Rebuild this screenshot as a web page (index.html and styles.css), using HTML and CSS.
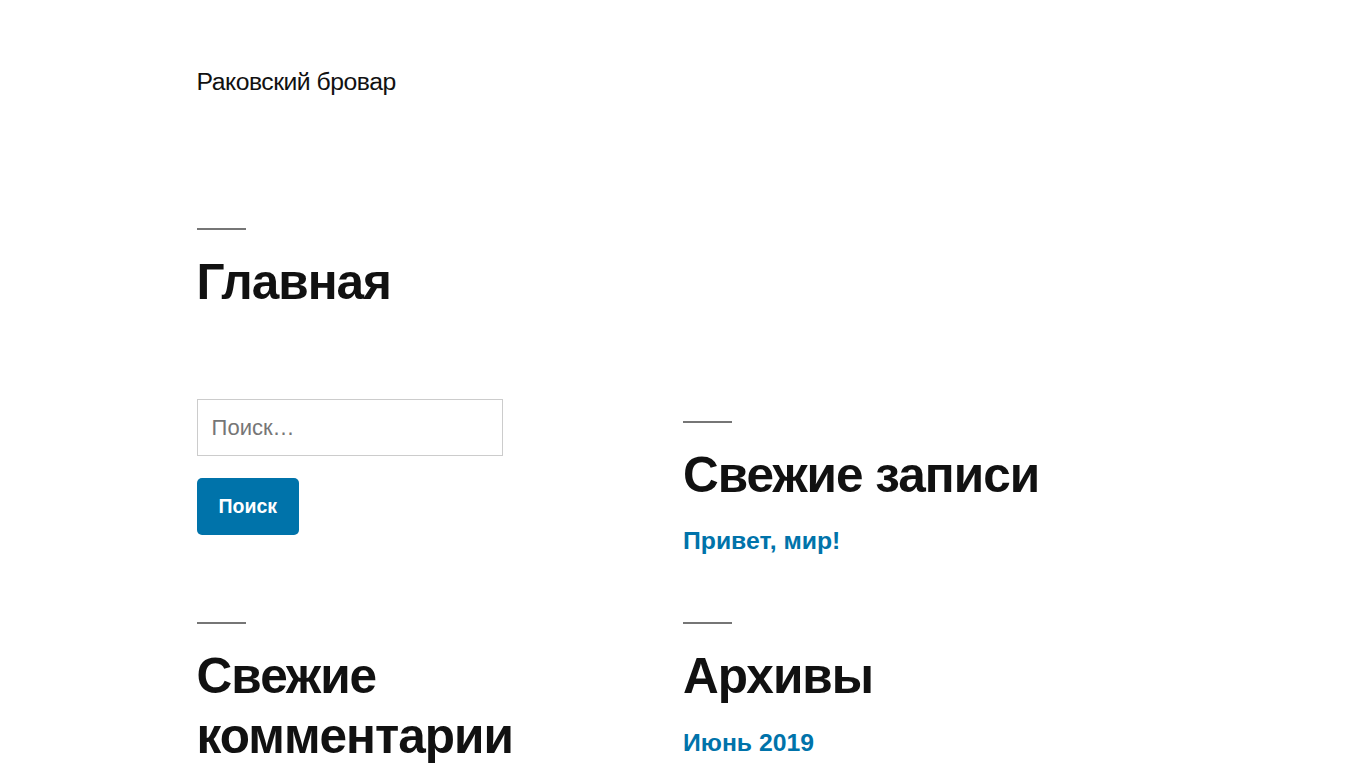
FILE: index.html
```html
<!DOCTYPE html>
<html lang="ru">
<head>
<meta charset="utf-8">
<title>Раковский бровар</title>
<link rel="stylesheet" href="styles.css">
</head>
<body>
<header class="site-header">
  <p class="site-title">Раковский бровар</p>
</header>
<main class="site-main">
  <header class="page-header">
    <h1 class="entry-title">Главная</h1>
  </header>
  <section class="widget-area">
    <div class="widget widget-search">
      <form class="search-form">
        <input class="search-field" type="search" placeholder="Поиск…">
        <button class="search-submit" type="button">Поиск</button>
      </form>
    </div>
    <div class="widget">
      <h2 class="widget-title">Свежие записи</h2>
      <ul class="widget-list">
        <li><a href="#">Привет, мир!</a></li>
      </ul>
    </div>
    <div class="widget">
      <h2 class="widget-title">Свежие комментарии</h2>
    </div>
    <div class="widget">
      <h2 class="widget-title">Архивы</h2>
      <ul class="widget-list">
        <li><a href="#">Июнь 2019</a></li>
      </ul>
    </div>
  </section>
</main>
</body>
</html>
```

FILE: styles.css
```css
html, body {
  margin: 0;
  padding: 0;
  background: #fff;
}
body {
  font-family: "Liberation Sans", Arial, sans-serif;
  color: #111;
  font-size: 22px;
  line-height: 1.8;
}
.site-header {
  padding: 67px calc(10% + 60px) 0;
}
.site-title {
  margin: 0;
  font-size: 24.75px;
  font-weight: 400;
  letter-spacing: -0.02em;
  line-height: 1.2;
}
.site-main {
  margin: 0 calc(10% + 60px);
}
.page-header {
  margin-top: 131px;
}
.entry-title,
.widget-title {
  margin: 0;
  font-size: 49.5px;
  font-weight: 700;
  line-height: 1.2;
  letter-spacing: -0.02em;
}
.entry-title::before,
.widget-title::before {
  content: "";
  display: block;
  width: 49px;
  height: 2px;
  background: #767676;
  margin: 22px 0 22px;
}
.page-header .entry-title::before {
  margin-top: 0;
}
.widget-area {
  margin-top: 88px;
  display: grid;
  grid-template-columns: 1fr 1fr;
  row-gap: 44px;
}
.search-form {
  display: flex;
  flex-direction: column;
  align-items: flex-start;
  gap: 22px;
}
.search-field {
  box-sizing: border-box;
  width: 306px;
  height: 57px;
  border: 1px solid #ccc;
  border-radius: 0;
  padding: 0 14px;
  font-family: "Liberation Sans", Arial, sans-serif;
  font-size: 22px;
  color: #111;
  background: #fff;
  outline: none;
}
.search-field::placeholder {
  color: #767676;
  opacity: 1;
}
.search-submit {
  box-sizing: border-box;
  height: 57px;
  padding: 0 22px;
  border: 0;
  border-radius: 5px;
  background: #0073aa;
  color: #fff;
  font-family: "Liberation Sans", Arial, sans-serif;
  font-size: 19.5px;
  font-weight: 700;
  cursor: pointer;
}
.widget-list {
  list-style: none;
  margin: 22px 0 0;
  padding: 0;
}
.widget-list li {
  font-size: 24.75px;
  line-height: 1.2;
}
.widget-list a {
  color: #0073aa;
  font-weight: 700;
  text-decoration: none;
}
```
